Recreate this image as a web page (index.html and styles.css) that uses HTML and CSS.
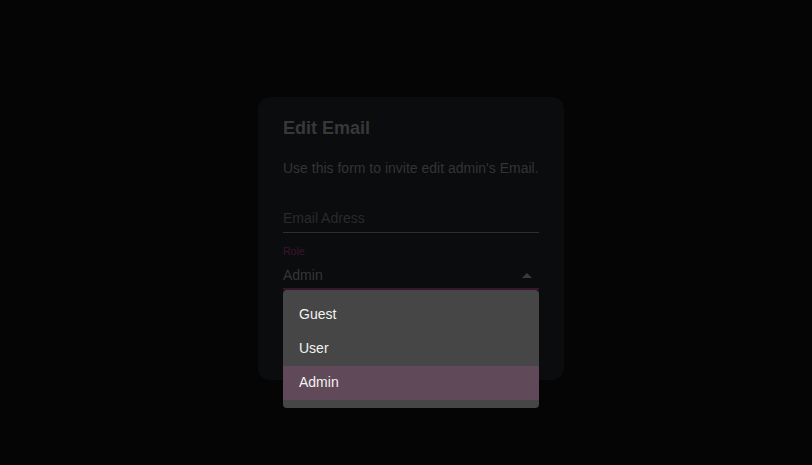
FILE: index.html
```html
<!DOCTYPE html>
<html>
<head>
<meta charset="utf-8">
<link rel="stylesheet" href="styles.css">
</head>
<body>
<div class="stage">
  <div class="card">
    <h2 class="title">Edit Email</h2>
    <p class="desc">Use this form to invite edit admin's Email.</p>
    <div class="field">
      <div class="input">Email Adress</div>
    </div>
    <div class="field select-field">
      <div class="label">Role</div>
      <div class="select">
        <span class="value">Admin</span>
        <span class="arrow"></span>
      </div>
    </div>
  </div>
</div>
<ul class="menu">
  <li class="item">Guest</li>
  <li class="item">User</li>
  <li class="item selected">Admin</li>
</ul>
</body>
</html>
```
FILE: styles.css
```css
html, body {
  margin: 0;
  padding: 0;
  height: 465px;
  overflow: hidden;
  background: #050505;
  font-family: "Liberation Sans", Arial, sans-serif;
}
.stage {
  padding: 97px 0 0 258px;
}
.card {
  box-sizing: border-box;
  width: 306px;
  height: 283px;
  padding: 20px 25px;
  background: #0b0c0e;
  border-radius: 12px;
}
.title {
  margin: 0;
  font-size: 18px;
  line-height: 22px;
  font-weight: bold;
  color: #383838;
}
.desc {
  margin: 19px 0 0;
  font-size: 14px;
  line-height: 20px;
  color: #343434;
}
.field {
  margin-top: 30px;
}
.input {
  font-size: 14px;
  line-height: 20px;
  color: #2a2a2a;
  padding-bottom: 4px;
  border-bottom: 1px solid #2e2e2e;
}
.select-field {
  margin-top: 11px;
}
.label {
  font-size: 10.5px;
  line-height: 14px;
  color: #3d1530;
}
.select {
  margin-top: 7px;
  display: flex;
  align-items: center;
  justify-content: space-between;
  padding-bottom: 3px;
  border-bottom: 2px solid #3b1530;
}
.value {
  font-size: 14px;
  line-height: 20px;
  color: #363636;
}
.arrow {
  width: 0;
  height: 0;
  margin-right: 7px;
  border-left: 5px solid transparent;
  border-right: 5px solid transparent;
  border-bottom: 5px solid #3a3a3a;
}
.menu {
  position: absolute;
  top: 290px;
  left: 283px;
  width: 256px;
  margin: 0;
  padding: 8px 0;
  list-style: none;
  background: #464646;
  border-radius: 4px;
}
.item {
  box-sizing: border-box;
  height: 34px;
  line-height: 32px;
  padding-left: 16px;
  font-size: 14px;
  color: #f2f2f2;
}
.item.selected {
  background: #604958;
}
```
